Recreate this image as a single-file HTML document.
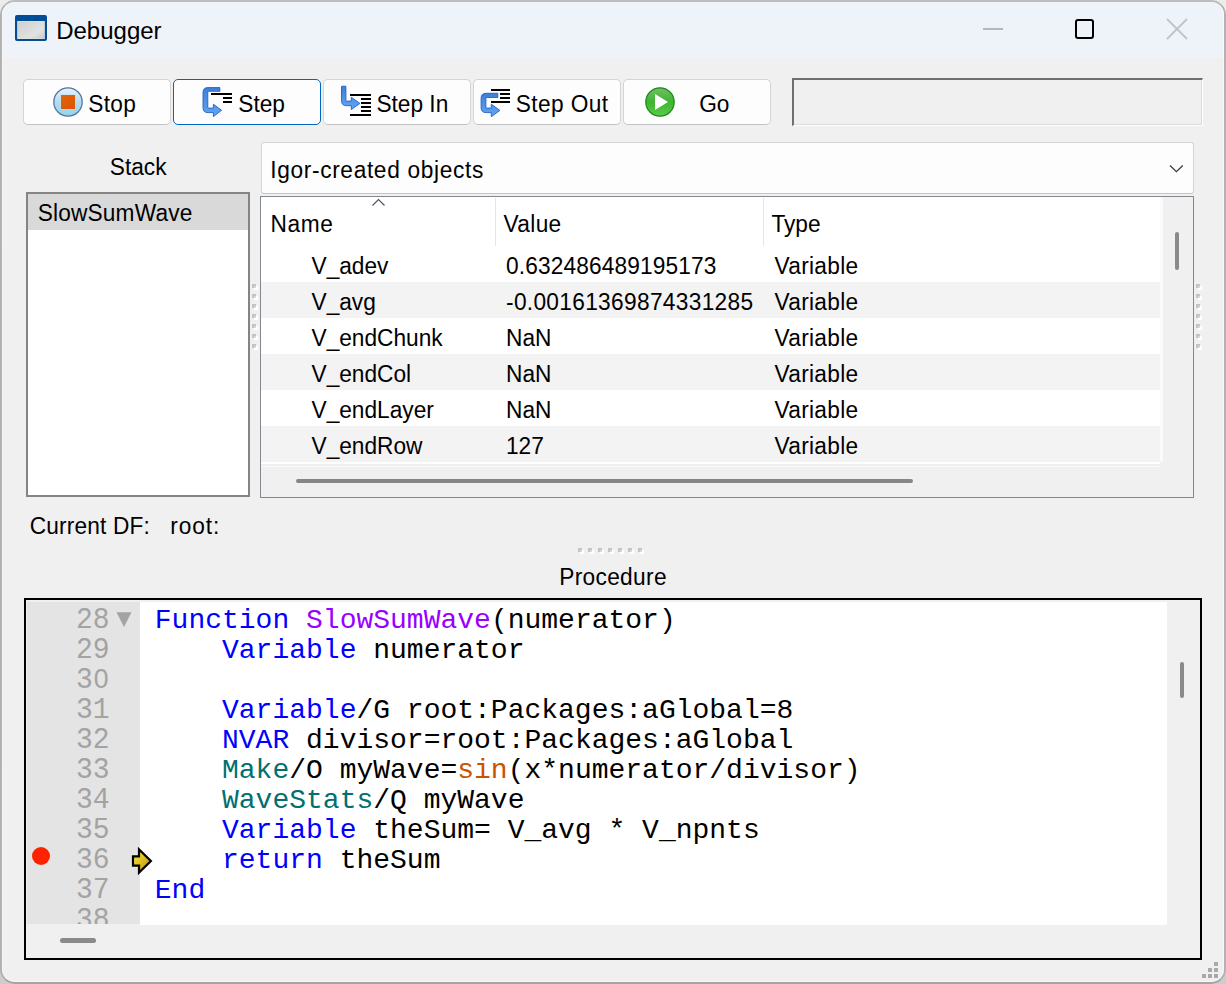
<!DOCTYPE html>
<html><head><meta charset="utf-8"><title>Debugger</title>
<style>
html,body{margin:0;padding:0;width:1226px;height:984px;overflow:hidden;background:linear-gradient(#ececec,#d8d8d8 50%,#cdcdcd);}
body{position:relative;font-family:"Liberation Sans", sans-serif;}
body div{position:absolute;}
.t{white-space:pre;}
</style></head><body>
<div style="left:0px;top:0px;width:1226px;height:984px;background:#f0f0f0;border:2px solid #b2b2b2;border-top-color:#bcbcbc;border-bottom-color:#a4a4a4;box-sizing:border-box;border-radius:15px;"></div>
<div style="left:2px;top:2px;width:1222px;height:56px;background:#eef3fa;border-radius:13px 13px 0 0;"></div>
<div style="left:2px;top:2px;width:1222px;height:980px;border:1px solid rgba(255,255,255,0.5);border-top-color:rgba(255,255,255,0.15);box-sizing:border-box;border-radius:13px;"></div>
<svg style="position:absolute;left:14px;top:14px" width="35" height="29" viewBox="0 0 35 29">
<defs><linearGradient id="ig" x1="0" y1="0" x2="1" y2="1"><stop offset="0" stop-color="#cfcfcf"/><stop offset="0.7" stop-color="#e2e2e2"/><stop offset="1" stop-color="#c8c8c8"/></linearGradient></defs>
<rect x="1" y="1" width="32" height="26" rx="2" fill="#004e98"/>
<rect x="3.2" y="7" width="27.6" height="18" fill="#eadfd6"/>
<rect x="3.8" y="7.6" width="26.4" height="16.8" fill="url(#ig)"/>
</svg>
<div class="t" style="left:56.20px;top:18.88px;font-size:24.0px;line-height:24.0px;font-family:'Liberation Sans', sans-serif;color:#000;transform:scaleY(1.03);transform-origin:0 20.32px;">Debugger</div>
<div style="left:983px;top:28px;width:20px;height:2px;background:#b7b7b7;"></div>
<div style="left:1074.5px;top:19.3px;width:19.5px;height:19.3px;border:2.2px solid #000;border-radius:3px;box-sizing:border-box;"></div>
<svg style="position:absolute;left:1160px;top:12px" width="34" height="34" viewBox="0 0 34 34">
<path d="M7.5 7.5 L26.5 26.5 M26.5 7.5 L7.5 26.5" stroke="#c0c4c8" stroke-width="1.8" stroke-linecap="round"/></svg>
<div style="left:23px;top:79px;width:148px;height:46px;background:#fdfdfd;border:1px solid #d4d4d4;border-bottom-color:#c2c2c2;border-radius:5px;box-sizing:border-box;"></div>
<div class="t" style="left:88.20px;top:92.78px;font-size:22.7px;line-height:22.7px;font-family:'Liberation Sans', sans-serif;color:#000;letter-spacing:0.35px;transform:scaleY(1.07);transform-origin:0 19.22px;">Stop</div>
<div style="left:173px;top:79px;width:148px;height:46px;background:#fdfdfd;border:1.5px solid #0067c0;border-radius:5px;box-sizing:border-box;"></div>
<div class="t" style="left:238.30px;top:92.78px;font-size:22.7px;line-height:22.7px;font-family:'Liberation Sans', sans-serif;color:#000;letter-spacing:0px;transform:scaleY(1.07);transform-origin:0 19.22px;">Step</div>
<div style="left:323px;top:79px;width:148px;height:46px;background:#fdfdfd;border:1px solid #d4d4d4;border-bottom-color:#c2c2c2;border-radius:5px;box-sizing:border-box;"></div>
<div class="t" style="left:376.40px;top:92.78px;font-size:22.7px;line-height:22.7px;font-family:'Liberation Sans', sans-serif;color:#000;letter-spacing:0px;transform:scaleY(1.07);transform-origin:0 19.22px;">Step In</div>
<div style="left:473px;top:79px;width:148px;height:46px;background:#fdfdfd;border:1px solid #d4d4d4;border-bottom-color:#c2c2c2;border-radius:5px;box-sizing:border-box;"></div>
<div class="t" style="left:515.80px;top:92.78px;font-size:22.7px;line-height:22.7px;font-family:'Liberation Sans', sans-serif;color:#000;letter-spacing:0.38px;transform:scaleY(1.07);transform-origin:0 19.22px;">Step Out</div>
<div style="left:623px;top:79px;width:148px;height:46px;background:#fdfdfd;border:1px solid #d4d4d4;border-bottom-color:#c2c2c2;border-radius:5px;box-sizing:border-box;"></div>
<div class="t" style="left:699.20px;top:92.78px;font-size:22.7px;line-height:22.7px;font-family:'Liberation Sans', sans-serif;color:#000;letter-spacing:0px;transform:scaleY(1.07);transform-origin:0 19.22px;">Go</div>
<svg style="position:absolute;left:52px;top:86px" width="32" height="32" viewBox="0 0 32 32">
<defs><linearGradient id="sg" x1="0" y1="0" x2="0" y2="1"><stop offset="0" stop-color="#eef1f6"/><stop offset="0.45" stop-color="#b9dcef"/><stop offset="1" stop-color="#93d3ea"/></linearGradient>
<linearGradient id="so" x1="0" y1="0" x2="1" y2="1"><stop offset="0" stop-color="#e0650a"/><stop offset="1" stop-color="#dc5206"/></linearGradient></defs>
<circle cx="16" cy="16" r="14.2" fill="url(#sg)" stroke="#4d72a3" stroke-width="1.25"/>
<rect x="8.6" y="8.6" width="14.8" height="14.8" fill="#b9e6f8"/>
<rect x="9" y="9" width="14" height="14" fill="url(#so)"/>
</svg>
<svg style="position:absolute;left:644px;top:86px" width="32" height="32" viewBox="0 0 32 32">
<defs><linearGradient id="gg" x1="0" y1="0" x2="0" y2="1"><stop offset="0" stop-color="#72bd6a"/><stop offset="0.5" stop-color="#3fb52e"/><stop offset="1" stop-color="#5ccb4c"/></linearGradient></defs>
<circle cx="16" cy="16" r="14.2" fill="url(#gg)" stroke="#178a14" stroke-width="1.2"/>
<path d="M11 8 L24 16 L11 24 Z" fill="#fff"/>
</svg>
<svg style="position:absolute;left:195px;top:82px" width="50" height="40" viewBox="0 0 50 40">
<defs><linearGradient id="ag1" x1="0" y1="0" x2="0" y2="1"><stop offset="0" stop-color="#3c7fd8"/><stop offset="1" stop-color="#64a6f4"/></linearGradient></defs>
<path d="M24.9 5.6 L24.9 9.3 L13.3 9.3 Q12.8 9.3 12.8 9.8 L12.8 25.6 Q12.8 26.1 13.3 26.1 L18.4 26.1 L18.4 22.2 L26.6 28.3 L18.4 34.6 L18.4 30.6 L13 30.6 Q8 30.6 8 25.6 L8 10.6 Q8 5.6 13 5.6 Z" fill="url(#ag1)" stroke="#1e62c4" stroke-width="0.9" stroke-linejoin="round"/>
<rect x="16" y="11" width="21" height="2" fill="#000"/>
<rect x="28" y="15" width="9" height="2" fill="#000"/>
<rect x="28" y="19" width="9" height="2" fill="#000"/>
</svg>
<svg style="position:absolute;left:335px;top:82px" width="50" height="40" viewBox="0 0 50 40">
<defs><linearGradient id="ag2" x1="0" y1="0" x2="0" y2="1"><stop offset="0" stop-color="#3c7fd8"/><stop offset="1" stop-color="#64a6f4"/></linearGradient></defs>
<path d="M6.5 4.5 Q6.5 4.2 6.8 4.2 L10.6 4.2 Q10.9 4.2 10.9 4.5 L10.9 18.5 Q10.9 19.1 11.5 19.1 L16.3 19.1 L16.3 15.3 L24.9 21.4 L16.3 27.6 L16.3 23.7 L11.5 23.7 Q6.5 23.7 6.5 18.7 Z" fill="url(#ag2)" stroke="#1e62c4" stroke-width="0.9" stroke-linejoin="round"/>
<rect x="15" y="12" width="21" height="2" fill="#000"/>
<rect x="26" y="16" width="10" height="2" fill="#000"/>
<rect x="26" y="20" width="10" height="2" fill="#000"/>
<rect x="26" y="24" width="10" height="2" fill="#000"/>
<rect x="26" y="28" width="10" height="2" fill="#000"/>
<rect x="15" y="32" width="21" height="2" fill="#000"/>
</svg>
<svg style="position:absolute;left:475px;top:82px" width="50" height="40" viewBox="0 0 50 40">
<defs><linearGradient id="ag3" x1="0" y1="0" x2="0" y2="1"><stop offset="0" stop-color="#3c7fd8"/><stop offset="1" stop-color="#64a6f4"/></linearGradient></defs>
<path d="M22.8 11.3 L22.8 15.5 L11.4 15.5 Q10.9 15.5 10.9 16 L10.9 25.6 Q10.9 26.1 11.4 26.1 L16.3 26.1 L16.3 22.2 L24.9 28.4 L16.3 34.7 L16.3 30.6 L11.1 30.6 Q6.1 30.6 6.1 25.6 L6.1 16.3 Q6.1 11.3 11.1 11.3 Z" fill="url(#ag3)" stroke="#1e62c4" stroke-width="0.9" stroke-linejoin="round"/>
<rect x="16" y="7" width="19" height="2" fill="#000"/>
<rect x="25" y="11" width="10" height="2" fill="#000"/>
<rect x="25" y="15" width="10" height="2" fill="#000"/>
<rect x="16" y="19" width="19" height="2" fill="#000"/>
</svg>
<div style="left:792px;top:78px;width:411px;height:48px;background:#f0f0f0;border-top:2px solid #6f6f6f;border-left:2px solid #6f6f6f;border-right:1px solid #fff;border-bottom:1px solid #fff;box-sizing:border-box;box-shadow:inset -1px -1px 0 #dcdcdc;"></div>
<div class="t" style="left:109.80px;top:156.48px;font-size:22.7px;line-height:22.7px;font-family:'Liberation Sans', sans-serif;color:#000;transform:scaleY(1.07);transform-origin:0 19.22px;">Stack</div>
<div style="left:26px;top:192px;width:224px;height:305px;background:#fff;border:2px solid #848484;box-sizing:border-box;"></div>
<div style="left:28px;top:194px;width:220px;height:36px;background:#d9d9d9;"></div>
<div class="t" style="left:37.80px;top:202.48px;font-size:22.7px;line-height:22.7px;font-family:'Liberation Sans', sans-serif;color:#000;letter-spacing:0.15px;transform:scaleY(1.07);transform-origin:0 19.22px;">SlowSumWave</div>
<div style="left:260.5px;top:142px;width:933px;height:52px;background:#fdfdfd;border:1px solid #d6d6d6;border-bottom-color:#c4c4c4;border-radius:3px;box-sizing:border-box;"></div>
<div class="t" style="left:270.20px;top:159.18px;font-size:22.7px;line-height:22.7px;font-family:'Liberation Sans', sans-serif;color:#000;letter-spacing:0.66px;transform:scaleY(1.07);transform-origin:0 19.22px;">Igor-created objects</div>
<svg style="position:absolute;left:1166px;top:160px" width="20" height="16" viewBox="0 0 20 16">
<path d="M4 5.5 L10.4 11.7 L16.8 5.5" fill="none" stroke="#3a3a3a" stroke-width="1.25"/></svg>
<div style="left:260px;top:196px;width:934px;height:302px;background:#f0f0f0;border:1px solid #828790;box-sizing:border-box;"></div>
<div style="left:261px;top:197px;width:899px;height:265px;background:#fff;"></div>
<div class="t" style="left:270.60px;top:212.78px;font-size:22.7px;line-height:22.7px;font-family:'Liberation Sans', sans-serif;color:#000;letter-spacing:0.6px;transform:scaleY(1.07);transform-origin:0 19.22px;">Name</div>
<div class="t" style="left:503.60px;top:212.78px;font-size:22.7px;line-height:22.7px;font-family:'Liberation Sans', sans-serif;color:#000;letter-spacing:0.32px;transform:scaleY(1.07);transform-origin:0 19.22px;">Value</div>
<div class="t" style="left:771.40px;top:212.78px;font-size:22.7px;line-height:22.7px;font-family:'Liberation Sans', sans-serif;color:#000;transform:scaleY(1.07);transform-origin:0 19.22px;">Type</div>
<div style="left:495px;top:198px;width:1px;height:48px;background:#e5e5e5;"></div>
<div style="left:763px;top:198px;width:1px;height:48px;background:#e5e5e5;"></div>
<svg style="position:absolute;left:368px;top:195px" width="20" height="14" viewBox="0 0 20 14">
<path d="M4.5 10.5 L10.5 4.5 L16.5 10.5" fill="none" stroke="#555" stroke-width="1.2"/></svg>
<div class="t" style="left:311.50px;top:254.78px;font-size:22.7px;line-height:22.7px;font-family:'Liberation Sans', sans-serif;color:#000;transform:scaleY(1.07);transform-origin:0 19.22px;">V_adev</div>
<div class="t" style="left:506.00px;top:254.78px;font-size:22.7px;line-height:22.7px;font-family:'Liberation Sans', sans-serif;color:#000;letter-spacing:0.14px;transform:scaleY(1.07);transform-origin:0 19.22px;">0.632486489195173</div>
<div class="t" style="left:774.50px;top:254.78px;font-size:22.7px;line-height:22.7px;font-family:'Liberation Sans', sans-serif;color:#000;letter-spacing:0.3px;transform:scaleY(1.07);transform-origin:0 19.22px;">Variable</div>
<div style="left:261px;top:282px;width:899px;height:36px;background:#f3f3f3;"></div>
<div class="t" style="left:311.50px;top:290.78px;font-size:22.7px;line-height:22.7px;font-family:'Liberation Sans', sans-serif;color:#000;transform:scaleY(1.07);transform-origin:0 19.22px;">V_avg</div>
<div class="t" style="left:506.00px;top:290.78px;font-size:22.7px;line-height:22.7px;font-family:'Liberation Sans', sans-serif;color:#000;letter-spacing:0.32px;transform:scaleY(1.07);transform-origin:0 19.22px;">-0.00161369874331285</div>
<div class="t" style="left:774.50px;top:290.78px;font-size:22.7px;line-height:22.7px;font-family:'Liberation Sans', sans-serif;color:#000;letter-spacing:0.3px;transform:scaleY(1.07);transform-origin:0 19.22px;">Variable</div>
<div class="t" style="left:311.50px;top:326.78px;font-size:22.7px;line-height:22.7px;font-family:'Liberation Sans', sans-serif;color:#000;transform:scaleY(1.07);transform-origin:0 19.22px;">V_endChunk</div>
<div class="t" style="left:506.00px;top:326.78px;font-size:22.7px;line-height:22.7px;font-family:'Liberation Sans', sans-serif;color:#000;letter-spacing:0px;transform:scaleY(1.07);transform-origin:0 19.22px;">NaN</div>
<div class="t" style="left:774.50px;top:326.78px;font-size:22.7px;line-height:22.7px;font-family:'Liberation Sans', sans-serif;color:#000;letter-spacing:0.3px;transform:scaleY(1.07);transform-origin:0 19.22px;">Variable</div>
<div style="left:261px;top:354px;width:899px;height:36px;background:#f3f3f3;"></div>
<div class="t" style="left:311.50px;top:362.78px;font-size:22.7px;line-height:22.7px;font-family:'Liberation Sans', sans-serif;color:#000;transform:scaleY(1.07);transform-origin:0 19.22px;">V_endCol</div>
<div class="t" style="left:506.00px;top:362.78px;font-size:22.7px;line-height:22.7px;font-family:'Liberation Sans', sans-serif;color:#000;letter-spacing:0px;transform:scaleY(1.07);transform-origin:0 19.22px;">NaN</div>
<div class="t" style="left:774.50px;top:362.78px;font-size:22.7px;line-height:22.7px;font-family:'Liberation Sans', sans-serif;color:#000;letter-spacing:0.3px;transform:scaleY(1.07);transform-origin:0 19.22px;">Variable</div>
<div class="t" style="left:311.50px;top:398.78px;font-size:22.7px;line-height:22.7px;font-family:'Liberation Sans', sans-serif;color:#000;transform:scaleY(1.07);transform-origin:0 19.22px;">V_endLayer</div>
<div class="t" style="left:506.00px;top:398.78px;font-size:22.7px;line-height:22.7px;font-family:'Liberation Sans', sans-serif;color:#000;letter-spacing:0px;transform:scaleY(1.07);transform-origin:0 19.22px;">NaN</div>
<div class="t" style="left:774.50px;top:398.78px;font-size:22.7px;line-height:22.7px;font-family:'Liberation Sans', sans-serif;color:#000;letter-spacing:0.3px;transform:scaleY(1.07);transform-origin:0 19.22px;">Variable</div>
<div style="left:261px;top:426px;width:899px;height:36px;background:#f3f3f3;"></div>
<div class="t" style="left:311.50px;top:434.78px;font-size:22.7px;line-height:22.7px;font-family:'Liberation Sans', sans-serif;color:#000;transform:scaleY(1.07);transform-origin:0 19.22px;">V_endRow</div>
<div class="t" style="left:506.00px;top:434.78px;font-size:22.7px;line-height:22.7px;font-family:'Liberation Sans', sans-serif;color:#000;letter-spacing:0px;transform:scaleY(1.07);transform-origin:0 19.22px;">127</div>
<div class="t" style="left:774.50px;top:434.78px;font-size:22.7px;line-height:22.7px;font-family:'Liberation Sans', sans-serif;color:#000;letter-spacing:0.3px;transform:scaleY(1.07);transform-origin:0 19.22px;">Variable</div>
<div style="left:1160px;top:197px;width:2.5px;height:265px;background:#fafafa;"></div>
<div style="left:1162.5px;top:197px;width:30.5px;height:266px;background:#f0f0f0;"></div>
<div style="left:1175px;top:232px;width:3.5px;height:37.5px;background:#8a8a8a;border-radius:2px;"></div>
<div style="left:261px;top:462px;width:932px;height:35px;background:#f0f0f0;"></div>
<div style="left:261px;top:462px;width:899px;height:1.5px;background:#fff;"></div>
<div style="left:262px;top:466px;width:898px;height:1.3px;background:#fbfbfb;"></div>
<div style="left:296px;top:479px;width:617px;height:3.5px;background:#868686;border-radius:2px;"></div>
<div style="left:254px;top:286px;width:4px;height:4px;background:#fff;"></div>
<div style="left:252px;top:284px;width:4px;height:4px;background:#c4c4c4;"></div>
<div style="left:254px;top:286px;width:2px;height:2px;background:#dadada;"></div>
<div style="left:1198px;top:286px;width:4px;height:4px;background:#fff;"></div>
<div style="left:1196px;top:284px;width:4px;height:4px;background:#c4c4c4;"></div>
<div style="left:1198px;top:286px;width:2px;height:2px;background:#dadada;"></div>
<div style="left:254px;top:296px;width:4px;height:4px;background:#fff;"></div>
<div style="left:252px;top:294px;width:4px;height:4px;background:#c4c4c4;"></div>
<div style="left:254px;top:296px;width:2px;height:2px;background:#dadada;"></div>
<div style="left:1198px;top:296px;width:4px;height:4px;background:#fff;"></div>
<div style="left:1196px;top:294px;width:4px;height:4px;background:#c4c4c4;"></div>
<div style="left:1198px;top:296px;width:2px;height:2px;background:#dadada;"></div>
<div style="left:254px;top:306px;width:4px;height:4px;background:#fff;"></div>
<div style="left:252px;top:304px;width:4px;height:4px;background:#c4c4c4;"></div>
<div style="left:254px;top:306px;width:2px;height:2px;background:#dadada;"></div>
<div style="left:1198px;top:306px;width:4px;height:4px;background:#fff;"></div>
<div style="left:1196px;top:304px;width:4px;height:4px;background:#c4c4c4;"></div>
<div style="left:1198px;top:306px;width:2px;height:2px;background:#dadada;"></div>
<div style="left:254px;top:316px;width:4px;height:4px;background:#fff;"></div>
<div style="left:252px;top:314px;width:4px;height:4px;background:#c4c4c4;"></div>
<div style="left:254px;top:316px;width:2px;height:2px;background:#dadada;"></div>
<div style="left:1198px;top:316px;width:4px;height:4px;background:#fff;"></div>
<div style="left:1196px;top:314px;width:4px;height:4px;background:#c4c4c4;"></div>
<div style="left:1198px;top:316px;width:2px;height:2px;background:#dadada;"></div>
<div style="left:254px;top:326px;width:4px;height:4px;background:#fff;"></div>
<div style="left:252px;top:324px;width:4px;height:4px;background:#c4c4c4;"></div>
<div style="left:254px;top:326px;width:2px;height:2px;background:#dadada;"></div>
<div style="left:1198px;top:326px;width:4px;height:4px;background:#fff;"></div>
<div style="left:1196px;top:324px;width:4px;height:4px;background:#c4c4c4;"></div>
<div style="left:1198px;top:326px;width:2px;height:2px;background:#dadada;"></div>
<div style="left:254px;top:336px;width:4px;height:4px;background:#fff;"></div>
<div style="left:252px;top:334px;width:4px;height:4px;background:#c4c4c4;"></div>
<div style="left:254px;top:336px;width:2px;height:2px;background:#dadada;"></div>
<div style="left:1198px;top:336px;width:4px;height:4px;background:#fff;"></div>
<div style="left:1196px;top:334px;width:4px;height:4px;background:#c4c4c4;"></div>
<div style="left:1198px;top:336px;width:2px;height:2px;background:#dadada;"></div>
<div style="left:254px;top:346px;width:4px;height:4px;background:#fff;"></div>
<div style="left:252px;top:344px;width:4px;height:4px;background:#c4c4c4;"></div>
<div style="left:254px;top:346px;width:2px;height:2px;background:#dadada;"></div>
<div style="left:1198px;top:346px;width:4px;height:4px;background:#fff;"></div>
<div style="left:1196px;top:344px;width:4px;height:4px;background:#c4c4c4;"></div>
<div style="left:1198px;top:346px;width:2px;height:2px;background:#dadada;"></div>
<div class="t" style="left:29.80px;top:514.98px;font-size:22.7px;line-height:22.7px;font-family:'Liberation Sans', sans-serif;color:#000;letter-spacing:0.16px;transform:scaleY(1.07);transform-origin:0 19.22px;">Current DF:</div>
<div class="t" style="left:170.30px;top:514.98px;font-size:22.7px;line-height:22.7px;font-family:'Liberation Sans', sans-serif;color:#000;letter-spacing:0.9px;transform:scaleY(1.07);transform-origin:0 19.22px;">root:</div>
<div style="left:580px;top:550px;width:4px;height:4px;background:#fff;"></div>
<div style="left:578px;top:548px;width:4px;height:4px;background:#c4c4c4;"></div>
<div style="left:580px;top:550px;width:2px;height:2px;background:#dadada;"></div>
<div style="left:590px;top:550px;width:4px;height:4px;background:#fff;"></div>
<div style="left:588px;top:548px;width:4px;height:4px;background:#c4c4c4;"></div>
<div style="left:590px;top:550px;width:2px;height:2px;background:#dadada;"></div>
<div style="left:600px;top:550px;width:4px;height:4px;background:#fff;"></div>
<div style="left:598px;top:548px;width:4px;height:4px;background:#c4c4c4;"></div>
<div style="left:600px;top:550px;width:2px;height:2px;background:#dadada;"></div>
<div style="left:610px;top:550px;width:4px;height:4px;background:#fff;"></div>
<div style="left:608px;top:548px;width:4px;height:4px;background:#c4c4c4;"></div>
<div style="left:610px;top:550px;width:2px;height:2px;background:#dadada;"></div>
<div style="left:620px;top:550px;width:4px;height:4px;background:#fff;"></div>
<div style="left:618px;top:548px;width:4px;height:4px;background:#c4c4c4;"></div>
<div style="left:620px;top:550px;width:2px;height:2px;background:#dadada;"></div>
<div style="left:630px;top:550px;width:4px;height:4px;background:#fff;"></div>
<div style="left:628px;top:548px;width:4px;height:4px;background:#c4c4c4;"></div>
<div style="left:630px;top:550px;width:2px;height:2px;background:#dadada;"></div>
<div style="left:640px;top:550px;width:4px;height:4px;background:#fff;"></div>
<div style="left:638px;top:548px;width:4px;height:4px;background:#c4c4c4;"></div>
<div style="left:640px;top:550px;width:2px;height:2px;background:#dadada;"></div>
<div class="t" style="left:559.20px;top:566.48px;font-size:22.7px;line-height:22.7px;font-family:'Liberation Sans', sans-serif;color:#000;letter-spacing:0.33px;transform:scaleY(1.07);transform-origin:0 19.22px;">Procedure</div>
<div style="left:24px;top:598px;width:1178px;height:362px;background:#f0f0f0;border:2px solid #000;box-sizing:border-box;"></div>
<div style="left:27px;top:602px;width:113px;height:321.5px;background:#e4e4e4;"></div>
<div style="left:140px;top:602px;width:1027px;height:322.5px;background:#fff;"></div>
<div style="left:1180px;top:662px;width:4px;height:36px;background:#8a8a8a;border-radius:2px;"></div>
<div style="left:60px;top:938px;width:36px;height:5px;background:#8a8a8a;border-radius:3px;"></div>
<div style="left:140px;top:602px;width:1027px;height:322px;overflow:hidden;">
<div class="t" style="left:14.80px;top:4.55px;font-size:28.0px;line-height:28.0px;font-family:'Liberation Mono', monospace;color:#000;"><span style="color:#0000ff">Function</span>&nbsp;<span style="color:#9900ff">SlowSumWave</span>(numerator)</div>
<div class="t" style="left:14.80px;top:34.55px;font-size:28.0px;line-height:28.0px;font-family:'Liberation Mono', monospace;color:#000;">&nbsp;&nbsp;&nbsp;&nbsp;<span style="color:#0000ff">Variable</span>&nbsp;numerator</div>
<div class="t" style="left:14.80px;top:94.55px;font-size:28.0px;line-height:28.0px;font-family:'Liberation Mono', monospace;color:#000;">&nbsp;&nbsp;&nbsp;&nbsp;<span style="color:#0000ff">Variable</span>/G&nbsp;root:Packages:aGlobal=8</div>
<div class="t" style="left:14.80px;top:124.55px;font-size:28.0px;line-height:28.0px;font-family:'Liberation Mono', monospace;color:#000;">&nbsp;&nbsp;&nbsp;&nbsp;<span style="color:#0000ff">NVAR</span>&nbsp;divisor=root:Packages:aGlobal</div>
<div class="t" style="left:14.80px;top:154.55px;font-size:28.0px;line-height:28.0px;font-family:'Liberation Mono', monospace;color:#000;">&nbsp;&nbsp;&nbsp;&nbsp;<span style="color:#007070">Make</span>/O&nbsp;myWave=<span style="color:#cc5200">sin</span>(x*numerator/divisor)</div>
<div class="t" style="left:14.80px;top:184.55px;font-size:28.0px;line-height:28.0px;font-family:'Liberation Mono', monospace;color:#000;">&nbsp;&nbsp;&nbsp;&nbsp;<span style="color:#007070">WaveStats</span>/Q&nbsp;myWave</div>
<div class="t" style="left:14.80px;top:214.55px;font-size:28.0px;line-height:28.0px;font-family:'Liberation Mono', monospace;color:#000;">&nbsp;&nbsp;&nbsp;&nbsp;<span style="color:#0000ff">Variable</span>&nbsp;theSum=&nbsp;V_avg&nbsp;*&nbsp;V_npnts</div>
<div class="t" style="left:14.80px;top:244.55px;font-size:28.0px;line-height:28.0px;font-family:'Liberation Mono', monospace;color:#000;">&nbsp;&nbsp;&nbsp;&nbsp;<span style="color:#0000ff">return</span>&nbsp;theSum</div>
<div class="t" style="left:14.80px;top:274.55px;font-size:28.0px;line-height:28.0px;font-family:'Liberation Mono', monospace;color:#000;"><span style="color:#0000ff">End</span></div>
</div>
<div style="left:27px;top:602px;width:113px;height:321.5px;overflow:hidden;">
<div class="t" style="left:49.00px;top:4.55px;font-size:28.0px;line-height:28.0px;font-family:'Liberation Mono', monospace;color:#a3a3a3;transform:scaleY(1.07);transform-origin:0 21.45px;">28</div>
<div class="t" style="left:49.00px;top:34.55px;font-size:28.0px;line-height:28.0px;font-family:'Liberation Mono', monospace;color:#a3a3a3;transform:scaleY(1.07);transform-origin:0 21.45px;">29</div>
<div class="t" style="left:49.00px;top:64.55px;font-size:28.0px;line-height:28.0px;font-family:'Liberation Mono', monospace;color:#a3a3a3;transform:scaleY(1.07);transform-origin:0 21.45px;">3<span style="font-family:'Liberation Sans',sans-serif;font-size:26.6px;display:inline-block;width:16.8px;text-align:center;line-height:0;">0</span></div>
<div class="t" style="left:49.00px;top:94.55px;font-size:28.0px;line-height:28.0px;font-family:'Liberation Mono', monospace;color:#a3a3a3;transform:scaleY(1.07);transform-origin:0 21.45px;">31</div>
<div class="t" style="left:49.00px;top:124.55px;font-size:28.0px;line-height:28.0px;font-family:'Liberation Mono', monospace;color:#a3a3a3;transform:scaleY(1.07);transform-origin:0 21.45px;">32</div>
<div class="t" style="left:49.00px;top:154.55px;font-size:28.0px;line-height:28.0px;font-family:'Liberation Mono', monospace;color:#a3a3a3;transform:scaleY(1.07);transform-origin:0 21.45px;">33</div>
<div class="t" style="left:49.00px;top:184.55px;font-size:28.0px;line-height:28.0px;font-family:'Liberation Mono', monospace;color:#a3a3a3;transform:scaleY(1.07);transform-origin:0 21.45px;">34</div>
<div class="t" style="left:49.00px;top:214.55px;font-size:28.0px;line-height:28.0px;font-family:'Liberation Mono', monospace;color:#a3a3a3;transform:scaleY(1.07);transform-origin:0 21.45px;">35</div>
<div class="t" style="left:49.00px;top:244.55px;font-size:28.0px;line-height:28.0px;font-family:'Liberation Mono', monospace;color:#a3a3a3;transform:scaleY(1.07);transform-origin:0 21.45px;">36</div>
<div class="t" style="left:49.00px;top:274.55px;font-size:28.0px;line-height:28.0px;font-family:'Liberation Mono', monospace;color:#a3a3a3;transform:scaleY(1.07);transform-origin:0 21.45px;">37</div>
<div class="t" style="left:49.00px;top:304.55px;font-size:28.0px;line-height:28.0px;font-family:'Liberation Mono', monospace;color:#a3a3a3;transform:scaleY(1.07);transform-origin:0 21.45px;">38</div>
</div>
<svg style="position:absolute;left:112px;top:608px" width="24" height="24" viewBox="0 0 24 24">
<path d="M4.5 4.2 L19.5 4.2 L12 19" fill="#a3a3a3"/></svg>
<div style="left:32px;top:847px;width:18px;height:18px;border-radius:50%;background:#ff2200;"></div>
<svg style="position:absolute;left:128px;top:844px" width="28" height="34" viewBox="0 0 28 34">
<defs><linearGradient id="ya" x1="0" y1="0" x2="1" y2="1"><stop offset="0" stop-color="#fff23a"/><stop offset="1" stop-color="#b8860b"/></linearGradient></defs>
<path d="M5 12.4 L11 12.4 L11 5.4 L22.9 17 L11 28.6 L11 21.6 L5 21.6 Z" fill="url(#ya)" stroke="#000" stroke-width="2.2" stroke-linejoin="miter"/></svg>
<div style="left:1214px;top:962px;width:4px;height:4px;background:#a9a9a9;"></div>
<div style="left:1208px;top:968px;width:4px;height:4px;background:#a9a9a9;"></div>
<div style="left:1214px;top:968px;width:4px;height:4px;background:#a9a9a9;"></div>
<div style="left:1202px;top:974px;width:4px;height:4px;background:#a9a9a9;"></div>
<div style="left:1208px;top:974px;width:4px;height:4px;background:#a9a9a9;"></div>
<div style="left:1214px;top:974px;width:4px;height:4px;background:#a9a9a9;"></div>
</body></html>
